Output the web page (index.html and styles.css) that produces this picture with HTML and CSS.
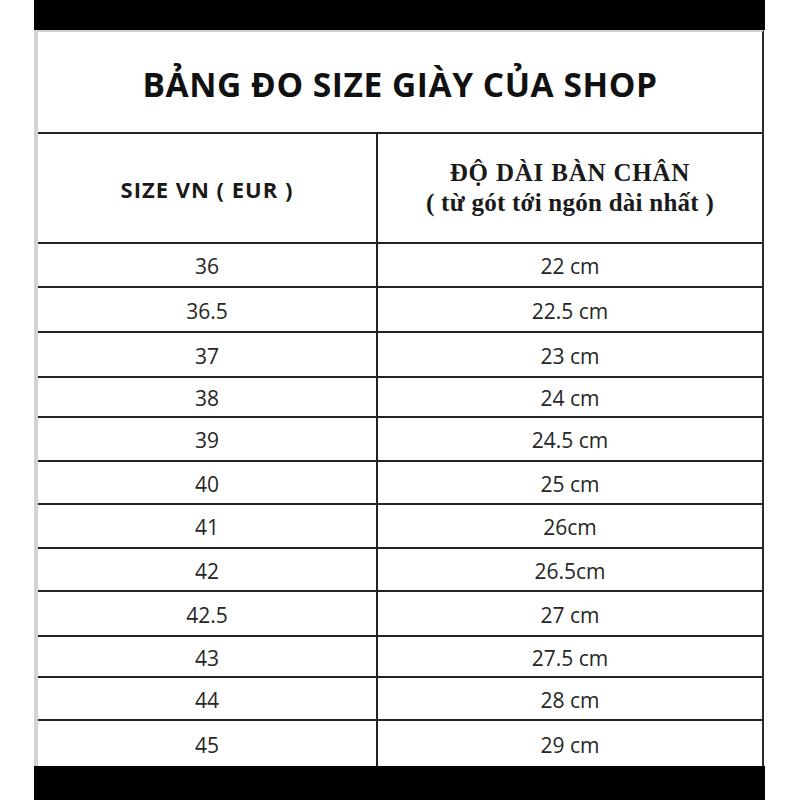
FILE: index.html
```html
<!DOCTYPE html>
<html lang="vi">
<head>
<meta charset="utf-8">
<title>Bảng đo size giày</title>
<link rel="stylesheet" href="styles.css">
</head>
<body>
<div class="sheet">
  <div class="bar"></div>
  <div class="table">
    <div class="title">BẢNG ĐO SIZE GIÀY CỦA SHOP</div>
    <div class="row head">
      <div class="c1">SIZE VN ( EUR )</div>
      <div class="c2">
        <div class="hl1">ĐỘ DÀI BÀN CHÂN</div>
        <div class="hl2">( từ gót tới ngón dài nhất )</div>
      </div>
    </div>
    <div class="row h44"><div class="c1">36</div><div class="c2">22 cm</div></div>
    <div class="row h45"><div class="c1">36.5</div><div class="c2">22.5 cm</div></div>
    <div class="row h45"><div class="c1">37</div><div class="c2">23 cm</div></div>
    <div class="row h40"><div class="c1">38</div><div class="c2">24 cm</div></div>
    <div class="row h44"><div class="c1">39</div><div class="c2">24.5 cm</div></div>
    <div class="row h43"><div class="c1">40</div><div class="c2">25 cm</div></div>
    <div class="row h44"><div class="c1">41</div><div class="c2">26cm</div></div>
    <div class="row h43"><div class="c1">42</div><div class="c2">26.5cm</div></div>
    <div class="row h45"><div class="c1">42.5</div><div class="c2">27 cm</div></div>
    <div class="row h41"><div class="c1">43</div><div class="c2">27.5 cm</div></div>
    <div class="row h43"><div class="c1">44</div><div class="c2">28 cm</div></div>
    <div class="row h45 last"><div class="c1">45</div><div class="c2">29 cm</div></div>
  </div>
  <div class="bar bottom"></div>
</div>
</body>
</html>
```
FILE: styles.css
```css
* { box-sizing: border-box; }
html, body { margin: 0; padding: 0; background: #fff; }
body { font-family: "Open Sans", "Noto Sans", sans-serif; color: #222; }

.sheet {
  margin-left: 34px;
  width: 731px;
}
.bar { height: 30px; background: #000; }
.bar.bottom { height: 34px; }

.table {
  margin-right: 1px;
  border-top: 2px solid #d2d2d2;
  border-left: 4px solid #d2d2d2;
  border-right: 2px solid #2b2b2b;
}

.title {
  height: 102px;
  border-bottom: 2px solid #222;
  display: flex;
  align-items: center;
  justify-content: center;
  font-weight: 700;
  font-size: 33.5px;
  color: #111;
  padding-top: 3px;
  letter-spacing: 0.55px;
}

.row {
  display: flex;
  border-bottom: 2px solid #222;
}
.row.last { border-bottom: none; }
.c1, .c2 {
  display: flex;
  align-items: center;
  justify-content: center;
  font-size: 21px;
  color: #262626;
}
.c1 { width: 340px; border-right: 2px solid #222; }
.c2 { width: 384px; }

.head { height: 110px; }
.head .c1 {
  font-weight: 700;
  font-size: 22px;
  letter-spacing: 1px;
  color: #1a1a1a;
  padding-top: 4px;
}
.head .c2 {
  flex-direction: column;
  font-family: "Liberation Serif", "Times New Roman", serif;
  font-weight: 700;
  color: #1a1a1a;
  padding-bottom: 2px;
}
.hl1 { font-size: 25px; line-height: 30px; letter-spacing: 0.8px; }
.hl2 { font-size: 25px; line-height: 30px; letter-spacing: 0.25px; }

.h40 { height: 40px; }
.h41 { height: 41px; }
.h43 { height: 43px; }
.h44 { height: 44px; }
.h45 { height: 45px; }
.row .c1, .row .c2 { padding-top: 2px; }
```
